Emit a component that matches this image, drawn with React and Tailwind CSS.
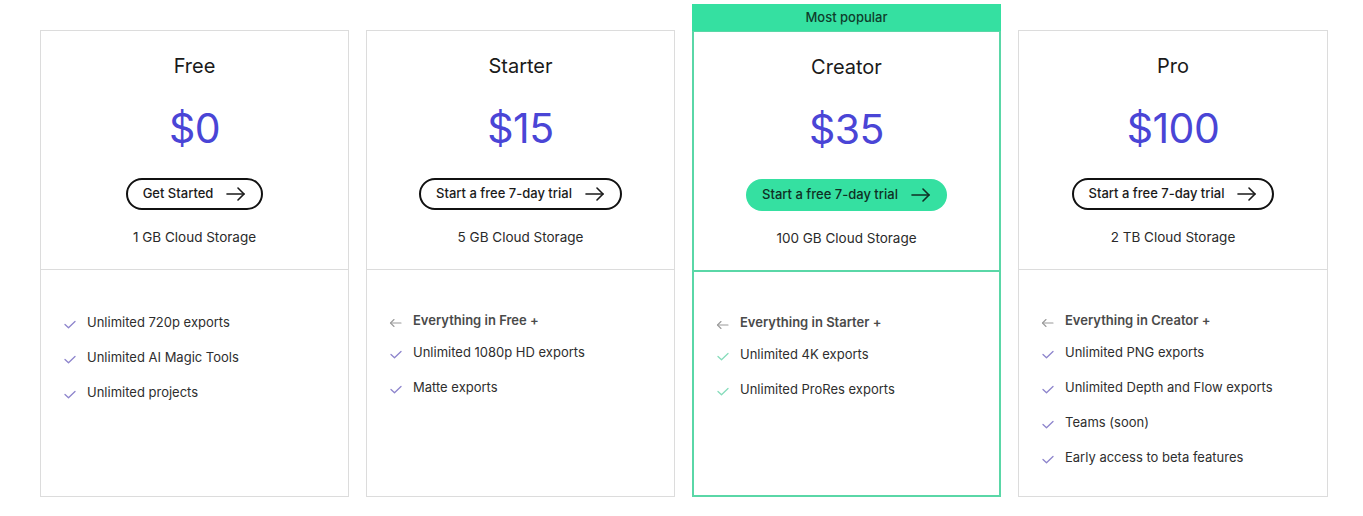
import React from 'react';

const plans = [
  {
    name: 'Free',
    price: '$0',
    cta: 'Get Started',
    storage: '1 GB Cloud Storage',
    base: null,
    features: ['Unlimited 720p exports', 'Unlimited AI Magic Tools', 'Unlimited projects'],
  },
  {
    name: 'Starter',
    price: '$15',
    cta: 'Start a free 7-day trial',
    storage: '5 GB Cloud Storage',
    base: 'Everything in Free +',
    features: ['Unlimited 1080p HD exports', 'Matte exports'],
  },
  {
    name: 'Creator',
    price: '$35',
    cta: 'Start a free 7-day trial',
    storage: '100 GB Cloud Storage',
    base: 'Everything in Starter +',
    features: ['Unlimited 4K exports', 'Unlimited ProRes exports'],
    popular: true,
  },
  {
    name: 'Pro',
    price: '$100',
    cta: 'Start a free 7-day trial',
    storage: '2 TB Cloud Storage',
    base: 'Everything in Creator +',
    features: [
      'Unlimited PNG exports',
      'Unlimited Depth and Flow exports',
      'Teams (soon)',
      'Early access to beta features',
    ],
  },
];

const ArrowRight = () => (
  <svg width="20" height="14" viewBox="0 0 20 14" fill="none" stroke="currentColor" strokeWidth="1.6" strokeLinecap="round" strokeLinejoin="round">
    <path d="M1 7h17" />
    <path d="M12 1l6 6-6 6" />
  </svg>
);

const ArrowLeft = () => (
  <svg width="13" height="10" viewBox="0 0 13 10" fill="none" stroke="currentColor" strokeWidth="1.1" strokeLinecap="round" strokeLinejoin="round">
    <path d="M12 5H1.5" />
    <path d="M5 1.5L1.5 5 5 8.5" />
  </svg>
);

const Check = () => (
  <svg width="12" height="9" viewBox="0 0 12 9" fill="none" stroke="currentColor" strokeWidth="1.3" strokeLinecap="round" strokeLinejoin="round">
    <path d="M1 4.5l3.5 3.2L11 1.5" />
  </svg>
);

const PlanCard = ({ plan, last }) => {
  const pop = plan.popular;
  return (
    <div className={last ? 'flex w-[310px] flex-col' : 'flex w-[309px] flex-col'}>
      {pop ? (
        <div className="flex h-[27px] items-center justify-center bg-[#35e0a1] text-[13px] font-medium text-[#0f3d2c]">
          Most popular
        </div>
      ) : (
        <div className="h-[26px]" />
      )}
      <div
        className={
          pop
            ? 'flex h-[466px] flex-col border-2 border-t border-[#5ad7a7] bg-white'
            : 'flex h-[467px] flex-col border border-[#dcdcdc] bg-white'
        }
      >
        <div className="flex h-[238px] flex-col items-center pt-[21px]">
          <div className="h-7 text-[20px] leading-7 text-[#1a1a1a]">{plan.name}</div>
          <div className="mt-[24px] h-12 text-[41px] leading-[48px] tracking-[-0.5px] text-[#4a45d6]">{plan.price}</div>
          <button
            className={
              pop
                ? 'mt-[26px] flex h-8 items-center gap-[13px] rounded-full bg-[#35e0a1] pl-4 pr-4 text-[13px] font-medium text-[#0f2f24]'
                : 'mt-[26px] flex h-8 items-center gap-[13px] rounded-full border-2 border-[#111] pl-[15px] pr-[15px] text-[13px] font-medium text-[#1a1a1a]'
            }
          >
            <span>{plan.cta}</span>
            <ArrowRight />
          </button>
          <div className="mt-[17px] h-5 text-[13.5px] leading-5 text-[#2a2a2a]">{plan.storage}</div>
        </div>
        <div className={pop ? 'border-t-2 border-[#5ad7a7]' : 'border-t border-[#dcdcdc]'} />
        <ul className={plan.base ? 'flex flex-col gap-[15px] pl-[21px] pt-[41px]' : 'flex flex-col gap-[15px] pl-[21px] pt-[43px]'}>
          {plan.base && (
            <li className="-mb-[3px] flex h-5 items-center gap-[10px] text-[13px] font-semibold text-[#4a4a4a]">
              <span className="flex w-[15px] justify-center pt-[3px] text-[#9a9a9a]">
                <ArrowLeft />
              </span>
              {plan.base}
            </li>
          )}
          {plan.features.map((f) => (
            <li key={f} className="flex h-5 items-center gap-[10px] text-[13px] text-[#2e2e2e]">
              <span className={pop ? 'flex w-[15px] justify-center pt-[2px] text-[#86dcbb]' : 'flex w-[15px] justify-center pt-[2px] text-[#8d84cc]'}>
                <Check />
              </span>
              {f}
            </li>
          ))}
        </ul>
      </div>
    </div>
  );
};

const App = () => {
  return (
    <div
      className="min-h-[516px] w-[1363px] bg-white"
      style={{ fontFamily: 'Inter, "Noto Sans", sans-serif' }}
    >
      <div className="flex gap-[17px] pl-10 pt-1">
        {plans.map((p, i) => (
          <PlanCard key={p.name} plan={p} last={i === plans.length - 1} />
        ))}
      </div>
    </div>
  );
};

export default App;
